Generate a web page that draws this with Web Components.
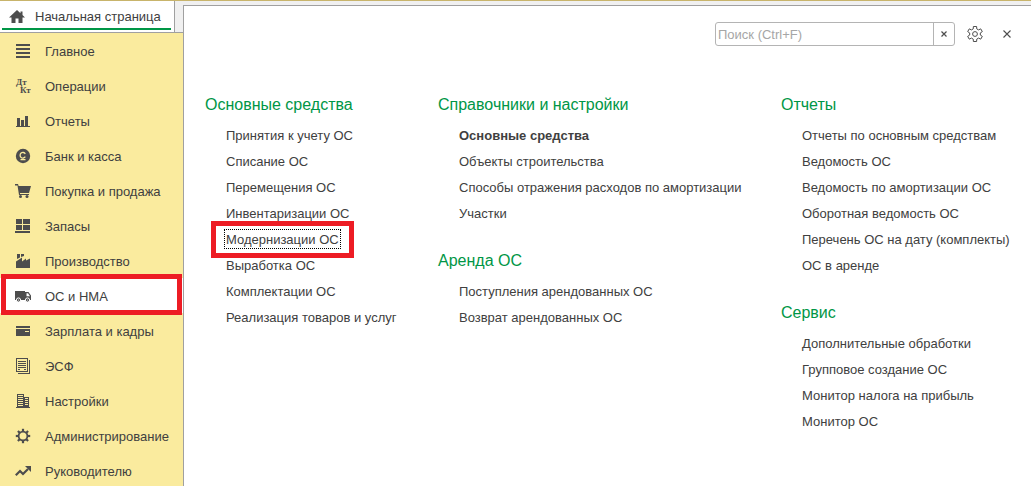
<!DOCTYPE html>
<html lang="ru">
<head>
<meta charset="utf-8">
<title>ОС и НМА</title>
<style>
html, body { height: 100%; margin: 0; }
body { font: 13px/26px "Liberation Sans", Arial, sans-serif; color: #404040; background: #f0f0f0; overflow: hidden; }
</style>
</head>
<body>
<app-shell>
  <home-tab slot="tab">Начальная страница</home-tab>
  <side-nav slot="nav">
    <nav-item icon="menu">Главное</nav-item>
    <nav-item icon="ledger">Операции</nav-item>
    <nav-item icon="chart">Отчеты</nav-item>
    <nav-item icon="coin">Банк и касса</nav-item>
    <nav-item icon="cart">Покупка и продажа</nav-item>
    <nav-item icon="stock">Запасы</nav-item>
    <nav-item icon="factory">Производство</nav-item>
    <nav-item icon="truck" current>ОС и НМА</nav-item>
    <nav-item icon="card">Зарплата и кадры</nav-item>
    <nav-item icon="docs">ЭСФ</nav-item>
    <nav-item icon="building">Настройки</nav-item>
    <nav-item icon="gear">Администрирование</nav-item>
    <nav-item icon="trend">Руководителю</nav-item>
  </side-nav>
  <search-bar></search-bar>
  <command-columns>
    <div>
      <command-group heading="Основные средства">
        <command-link>Принятия к учету ОС</command-link>
        <command-link>Списание ОС</command-link>
        <command-link>Перемещения ОС</command-link>
        <command-link>Инвентаризации ОС</command-link>
        <command-link marked>Модернизации ОС</command-link>
        <command-link>Выработка ОС</command-link>
        <command-link>Комплектации ОС</command-link>
        <command-link>Реализация товаров и услуг</command-link>
      </command-group>
    </div>
    <div>
      <command-group heading="Справочники и настройки">
        <command-link strong>Основные средства</command-link>
        <command-link>Объекты строительства</command-link>
        <command-link>Способы отражения расходов по амортизации</command-link>
        <command-link>Участки</command-link>
      </command-group>
      <command-group heading="Аренда ОС">
        <command-link>Поступления арендованных ОС</command-link>
        <command-link>Возврат арендованных ОС</command-link>
      </command-group>
    </div>
    <div>
      <command-group heading="Отчеты">
        <command-link>Отчеты по основным средствам</command-link>
        <command-link>Ведомость ОС</command-link>
        <command-link>Ведомость по амортизации ОС</command-link>
        <command-link>Оборотная ведомость ОС</command-link>
        <command-link>Перечень ОС на дату (комплекты)</command-link>
        <command-link>ОС в аренде</command-link>
      </command-group>
      <command-group heading="Сервис">
        <command-link>Дополнительные обработки</command-link>
        <command-link>Групповое создание ОС</command-link>
        <command-link>Монитор налога на прибыль</command-link>
        <command-link>Монитор ОС</command-link>
      </command-group>
    </div>
  </command-columns>
</app-shell>
<script>
const gearTeeth = (n, c, r, R, w) => {
  let s = '';
  for (let i = 0; i < n; i++) s += `<rect x="${c - w / 2}" y="${c - R}" width="${w}" height="${R - r + 1}" transform="rotate(${i * 360 / n} ${c} ${c})"/>`;
  return s;
};
const gearOutline = (n, c, r, R) => {
  const step = 360 / n, pts = [];
  for (let i = 0; i < n; i++) {
    for (const [a, q] of [[-19, r], [-12, R], [12, R], [19, r]]) {
      const t = (i * step + a) * Math.PI / 180;
      pts.push((c + q * Math.sin(t)).toFixed(2) + ' ' + (c - q * Math.cos(t)).toFixed(2));
    }
  }
  return 'M' + pts.join('L') + 'z';
};
const ICONS = {
  home: '<path d="M8 1L0 8.500h2.500V14H6.500V9.500h3V14h4V8.500H16L13.500 6.100V2.500h-2v1.700z"/>',
  menu: '<path shape-rendering="crispEdges" d="M1 1h14v2H1zM1 5h14v2H1zM1 9h14v2H1zM1 13h14v2H1z"/>',
  ledger: '<g font-family="Liberation Serif, serif" font-weight="bold" font-size="9"><text x="1" y="7">Дт</text><text x="5" y="15">Кт</text></g>',
  chart: '<path shape-rendering="crispEdges" d="M2 5h3v8h1V7h3v6h1V3h3v10h2v1H1v-1h1z"/>',
  coin: '<circle cx="8" cy="8" r="7.200"/><path d="M10.300 5.800A2.800 2.800 0 1 0 10.300 8.700M5.500 11.600h5" fill="none" stroke="#faeb9e" stroke-width="1.300"/>',
  cart: '<path d="M0 1h3l.6 2H16l-2 7H5v1h9v1H4L2.500 2.500H0z"/><circle cx="5.500" cy="13.500" r="1.500"/><circle cx="12" cy="13.500" r="1.500"/>',
  stock: '<path shape-rendering="crispEdges" d="M1 1h6v5H1zM8 1h7v5H8zM1 7h6v5H1zM8 7h7v5H8zM0 13h15v2H0z"/>',
  factory: '<path d="M2 1h3v3.500L2 6zM6 1h3v2L6 4zM1 8.500l6-4v4l4-3v2l4-2V15H1z"/>',
  truck: '<path d="M0 3h10v9H0zM10 4h3.500L16 7.500V12h-6zm1.500 1.200v3h3.500l-2-3z" fill-rule="evenodd"/><circle cx="3.500" cy="12" r="2.100" stroke="#fff"/><circle cx="12.500" cy="12" r="2.100" stroke="#fff"/><circle cx="3.500" cy="12" r=".6" fill="#fff"/><circle cx="12.500" cy="12" r=".6" fill="#fff"/>',
  card: '<path shape-rendering="crispEdges" fill-rule="evenodd" d="M1 3h14v2H1zM1 6h14v7H1zm9 2v1h4V8z"/>',
  docs: '<path shape-rendering="crispEdges" fill-rule="evenodd" d="M1 0h12v14H1zm1 1v12h10V1zM3 3h8v1H3zM3 5h8v1H3zM3 7h8v1H3zM3 9h8v1H3zM3 11h2v1H3zM9 11h2v1H9zM14 2h1v14H3v-1h11z"/>',
  building: '<path shape-rendering="crispEdges" fill-rule="evenodd" d="M2 1h7v3h5v10h1v1H1v-1h1zm1 1v1h5V2zm0 2v1h5V4zm0 2v1h5V6zm0 2v1h5V8zm0 2v1h5v-1zm0 2v1h5v-1zM10 5v1h3V5zm0 2v1h3V7zm0 2v1h3V9zm0 2v1h3v-1z"/>',
  gear: '<circle cx="8" cy="8" r="4.400" fill="none" stroke="currentColor" stroke-width="1.800"/>' + gearTeeth(8, 8, 5, 7.2, 2.2),
  trend: '<path d="M.8 12.200l4.200-4.200 3 3 5-5" fill="none" stroke="currentColor" stroke-width="2.200"/><path d="M10 3h6v6z"/>',
  options: `<path d="${gearOutline(6, 8, 5.4, 7.7)}" fill="none" stroke="currentColor" stroke-linejoin="round"/><circle cx="8" cy="8" r="2.400" fill="none" stroke="currentColor"/>`,
  clear: '<path d="M5.500 5.500l5 5M10.500 5.500l-5 5" fill="none" stroke="currentColor" stroke-width="1.200"/>',
  close: '<path d="M4.500 4.500l7 7M11.500 4.500l-7 7" fill="none" stroke="currentColor" stroke-width="1.100"/>'
};
const icon = name => `<svg width="16" height="16" viewBox="0 0 16 16" fill="currentColor" color="#4d4d4d" aria-hidden="true">${ICONS[name]}</svg>`;
const BASE = '*{box-sizing:border-box} svg{display:block;flex:none} a{color:inherit;text-decoration:none} button{font:inherit;color:inherit;background:none;border:0;padding:0;display:flex;align-items:center;justify-content:center}';
const define = (tag, render) => customElements.define(tag, class extends HTMLElement {
  connectedCallback() {
    if (!this.shadowRoot) this.attachShadow({ mode: 'open' }).innerHTML = render(this);
  }
});

define('app-shell', () => `<style>${BASE}
  :host{display:grid;grid-template-columns:183px 1fr;height:100%;min-height:0;box-sizing:border-box;border-top:1px solid #c8b46b}
  .left{display:flex;flex-direction:column;min-width:0}
  main{margin-top:4px;border:solid #a0a0a0;border-width:1px 0 0 1px;background:#fff;min-width:0}
  </style>
  <div class="left"><slot name="tab"></slot><slot name="nav"></slot></div>
  <main><slot></slot></main>`);

define('home-tab', () => `<style>${BASE}
  :host{display:block;border-bottom:1px solid #a0a0a0}
  a{display:flex;align-items:center;gap:10px;height:31px;margin-right:8px;padding-left:9px;background:linear-gradient(#009646,#009646) 2px 27px / 169px 2px no-repeat #fff;border-right:1px solid #a0a0a0}
  </style><a href="#home">${icon('home')}<slot></slot></a>`);

define('side-nav', () => `<style>${BASE}
  :host{display:block;flex:1;background:#faeb9e}
  </style><nav aria-label="Разделы"><slot></slot></nav>`);

define('nav-item', el => `<style>${BASE}
  :host{display:block;position:relative}
  a{display:flex;align-items:center;gap:14px;height:35px;padding:1px 0 0 15px}
  span{padding-top:2px}
  :host([current]) a{background:#fff}
  :host([current])::after{content:"";position:absolute;inset:-4px 1px -2px 1px;border:5px solid #ed1c24;pointer-events:none;z-index:1}
  </style><a href="#${el.getAttribute('icon')}"${el.hasAttribute('current') ? ' aria-current="page"' : ''}>${icon(el.getAttribute('icon'))}<span><slot></slot></span></a>`);

define('search-bar', () => `<style>${BASE}
  :host{display:flex;justify-content:flex-end;gap:8px;padding:16px 12px 46px}
  .box{display:flex;width:240px;height:24px;border:1px solid #b4b4b4;border-radius:3px}
  input{flex:1;min-width:0;border:0;outline:0;background:none;padding:1px 2px 0;font:inherit;color:inherit}
  input::placeholder{color:#a6a6a6;opacity:1}
  .box button{width:21px;border-left:1px solid #b4b4b4}
  .tool{width:24px;height:24px}
  </style>
  <div class="box"><input type="text" aria-label="Поиск" placeholder="Поиск (Ctrl+F)"><button aria-label="Очистить">${icon('clear')}</button></div>
  <button class="tool" aria-label="Настройка">${icon('options')}</button>
  <button class="tool" aria-label="Закрыть">${icon('close')}</button>`);

define('command-columns', () => `<style>
  :host{display:grid;grid-template-columns:233fr 343fr 250fr;padding-left:21px}
  ::slotted(div){display:flex;flex-direction:column;gap:21px;min-width:0}
  </style><slot></slot>`);

define('command-group', el => `<style>${BASE}
  :host{display:block;white-space:nowrap}
  h2{margin:0 0 5px;font-size:16px;line-height:26px;font-weight:400;color:#009646}
  .items{padding-left:21px}
  </style><h2>${el.getAttribute('heading')}</h2><div class="items"><slot></slot></div>`);

define('command-link', el => `<style>${BASE}
  :host{display:block;height:26px}
  a{position:relative;display:inline-block}
  :host([strong]) a{font-weight:700}
  :host([marked]) a::before{content:"";position:absolute;inset:2px -2px 4px;border:1px dotted #000}
  :host([marked]) a::after{content:"";position:absolute;inset:-6px -15px -5px;border:5px solid #ed1c24;pointer-events:none}
  </style><a href="#command"><slot></slot></a>`);
</script>
</body>
</html>
